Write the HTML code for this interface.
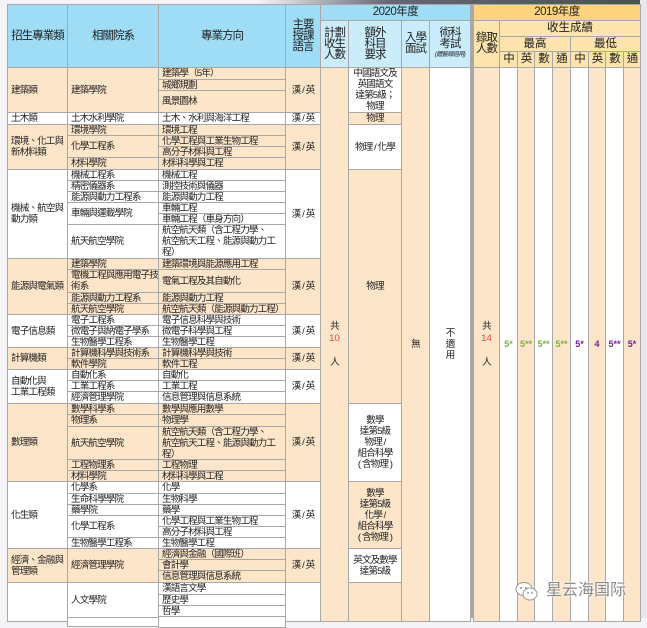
<!DOCTYPE html>
<html><head><meta charset="utf-8">
<style>
*{margin:0;padding:0;box-sizing:border-box}
body{width:647px;height:618px;overflow:hidden;background:#f4f4f6;position:relative;font-family:"Liberation Sans","Noto Sans CJK TC",sans-serif;font-size:10px;color:#222}
.c{position:absolute;border:1px solid #a8a8a8;display:flex;align-items:center;line-height:11px;overflow:hidden;white-space:nowrap;font-size:9.6px;letter-spacing:-0.9px}
.l{padding-left:3px}
.m{justify-content:center;text-align:center}
.o{background:#fde5c9}
.w{background:#fff}
.b{background:#9fddf6}
.lb{background:#cbedfb}
.y{background:#fdd37f}
.ly{background:#fde3ac}
.h{font-size:11.5px;line-height:11px;letter-spacing:-1px}
.v{flex-direction:column;justify-content:center;text-align:center}
.g{color:#7cb342;font-weight:bold;font-size:9px;letter-spacing:0}
.p{color:#7b1fa2;font-weight:bold;font-size:9px;letter-spacing:0}
.r{color:#f0443a;letter-spacing:0}
</style></head><body>
<div style="position:absolute;left:0;top:0;width:647px;height:5px;background:linear-gradient(90deg,#f4f4f6 40%,#667 60%,#454 100%)"></div>
<div style="position:absolute;left:640px;top:0;width:7px;height:618px;background:#e8e6ea"></div>

<!-- headers -->
<div class="c b m h" style="left:7px;top:4px;width:61px;height:64px">招生專業類</div>
<div class="c b m h" style="left:67px;top:4px;width:92px;height:64px">相關院系</div>
<div class="c b m h" style="left:158px;top:4px;width:128px;height:64px">專業方向</div>
<div class="c b v h" style="left:285px;top:4px;width:36px;height:64px">主要<br>授課<br>語言</div>
<div class="c b m h" style="left:320px;top:4px;width:151px;height:17px;letter-spacing:-0.5px">2020年度</div>
<div class="c lb v h" style="left:320px;top:20px;width:29px;height:48px">計劃<br>收生<br>人數</div>
<div class="c lb v h" style="left:348px;top:20px;width:54px;height:48px">額外<br>科目<br>要求</div>
<div class="c lb v h" style="left:401px;top:20px;width:29px;height:48px">入學<br>面試</div>
<div class="c lb v h" style="left:429px;top:20px;width:42px;height:48px">術科<br>考試<br><span style="font-size:6px;font-style:italic;letter-spacing:-0.5px">(體藝類適用)</span></div>
<div style="position:absolute;left:470px;top:4px;width:4px;height:614px;background:#a8a8a8"></div>
<div class="c y m h" style="left:473px;top:4px;width:168px;height:17px;letter-spacing:-0.5px">2019年度</div>
<div class="c ly v h" style="left:473px;top:20px;width:27px;height:48px">錄取<br>人數</div>
<div class="c ly m h" style="left:499px;top:20px;width:142px;height:17px;letter-spacing:0">收生成績</div>
<div class="c ly m h" style="left:499px;top:36px;width:72px;height:16px;letter-spacing:0">最高</div>
<div class="c ly m h" style="left:570px;top:36px;width:71px;height:16px;letter-spacing:0">最低</div>
<div class="c ly m h" style="left:499px;top:51px;width:19px;height:17px">中</div>
<div class="c ly m h" style="left:517px;top:51px;width:18px;height:17px">英</div>
<div class="c ly m h" style="left:534px;top:51px;width:19px;height:17px">數</div>
<div class="c ly m h" style="left:552px;top:51px;width:19px;height:17px">通</div>
<div class="c ly m h" style="left:570px;top:51px;width:19px;height:17px">中</div>
<div class="c ly m h" style="left:588px;top:51px;width:18px;height:17px">英</div>
<div class="c ly m h" style="left:605px;top:51px;width:19px;height:17px">數</div>
<div class="c ly m h" style="left:623px;top:51px;width:18px;height:17px">通</div>

<!-- col 1 categories -->
<div class="c o l" style="left:7px;top:67px;width:61px;height:46px">建築類</div>
<div class="c w l" style="left:7px;top:112px;width:61px;height:13px">土木類</div>
<div class="c o l" style="left:7px;top:124px;width:61px;height:46px">環境、化工與<br>新材料類</div>
<div class="c w l" style="left:7px;top:169px;width:61px;height:90px">機械、航空與<br>動力類</div>
<div class="c o l" style="left:7px;top:258px;width:61px;height:57px">能源與電氣類</div>
<div class="c w l" style="left:7px;top:314px;width:61px;height:34px">電子信息類</div>
<div class="c o l" style="left:7px;top:347px;width:61px;height:23px">計算機類</div>
<div class="c w l" style="left:7px;top:369px;width:61px;height:35px">自動化與<br>工業工程類</div>
<div class="c o l" style="left:7px;top:403px;width:61px;height:79px">數理類</div>
<div class="c w l" style="left:7px;top:481px;width:61px;height:68px">化生類</div>
<div class="c o l" style="left:7px;top:548px;width:61px;height:35px">經濟、金融與<br>管理類</div>
<div class="c w l" style="left:7px;top:582px;width:61px;height:40px"></div>

<!-- col 2 depts -->
<div class="c o l" style="left:67px;top:67px;width:92px;height:46px">建築學院</div>
<div class="c w l" style="left:67px;top:112px;width:92px;height:13px">土木水利學院</div>
<div class="c o l" style="left:67px;top:124px;width:92px;height:12px">環境學院</div>
<div class="c o l" style="left:67px;top:135px;width:92px;height:23px">化學工程系</div>
<div class="c o l" style="left:67px;top:157px;width:92px;height:13px">材料學院</div>
<div class="c w l" style="left:67px;top:169px;width:92px;height:12px">機械工程系</div>
<div class="c w l" style="left:67px;top:180px;width:92px;height:12px">精密儀器系</div>
<div class="c w l" style="left:67px;top:191px;width:92px;height:12px">能源與動力工程系</div>
<div class="c w l" style="left:67px;top:202px;width:92px;height:23px">車輛與運載學院</div>
<div class="c w l" style="left:67px;top:224px;width:92px;height:35px">航天航空學院</div>
<div class="c o l" style="left:67px;top:258px;width:92px;height:12px">建築學院</div>
<div class="c o l" style="left:67px;top:269px;width:92px;height:24px">電機工程與應用電子技<br>術系</div>
<div class="c o l" style="left:67px;top:292px;width:92px;height:12px">能源與動力工程系</div>
<div class="c o l" style="left:67px;top:303px;width:92px;height:12px">航天航空學院</div>
<div class="c w l" style="left:67px;top:314px;width:92px;height:12px">電子工程系</div>
<div class="c w l" style="left:67px;top:325px;width:92px;height:12px">微電子與納電子學系</div>
<div class="c w l" style="left:67px;top:336px;width:92px;height:12px">生物醫學工程系</div>
<div class="c o l" style="left:67px;top:347px;width:92px;height:12px">計算機科學與技術系</div>
<div class="c o l" style="left:67px;top:358px;width:92px;height:12px">軟件學院</div>
<div class="c w l" style="left:67px;top:369px;width:92px;height:12px">自動化系</div>
<div class="c w l" style="left:67px;top:380px;width:92px;height:12px">工業工程系</div>
<div class="c w l" style="left:67px;top:391px;width:92px;height:13px">經濟管理學院</div>
<div class="c o l" style="left:67px;top:403px;width:92px;height:12px">數學科學系</div>
<div class="c o l" style="left:67px;top:414px;width:92px;height:13px">物理系</div>
<div class="c o l" style="left:67px;top:426px;width:92px;height:34px">航天航空學院</div>
<div class="c o l" style="left:67px;top:459px;width:92px;height:12px">工程物理系</div>
<div class="c o l" style="left:67px;top:470px;width:92px;height:12px">材料學院</div>
<div class="c w l" style="left:67px;top:481px;width:92px;height:13px">化學系</div>
<div class="c w l" style="left:67px;top:493px;width:92px;height:12px">生命科學學院</div>
<div class="c w l" style="left:67px;top:504px;width:92px;height:12px">藥學院</div>
<div class="c w l" style="left:67px;top:515px;width:92px;height:23px">化學工程系</div>
<div class="c w l" style="left:67px;top:537px;width:92px;height:12px">生物醫學工程系</div>
<div class="c o l" style="left:67px;top:548px;width:92px;height:35px">經濟管理學院</div>
<div class="c w l" style="left:67px;top:582px;width:92px;height:36px">人文學院</div>
<div class="c w l" style="left:67px;top:617px;width:92px;height:10px"></div>

<!-- col 3 directions -->
<div class="c o l" style="left:158px;top:67px;width:128px;height:13px">建築學（5年）</div>
<div class="c o l" style="left:158px;top:79px;width:128px;height:12px">城鄉規劃</div>
<div class="c o l" style="left:158px;top:90px;width:128px;height:23px">風景園林</div>
<div class="c w l" style="left:158px;top:112px;width:128px;height:13px">土木、水利與海洋工程</div>
<div class="c o l" style="left:158px;top:124px;width:128px;height:12px">環境工程</div>
<div class="c o l" style="left:158px;top:135px;width:128px;height:12px">化學工程與工業生物工程</div>
<div class="c o l" style="left:158px;top:146px;width:128px;height:12px">高分子材料與工程</div>
<div class="c o l" style="left:158px;top:157px;width:128px;height:13px">材料科學與工程</div>
<div class="c w l" style="left:158px;top:169px;width:128px;height:12px">機械工程</div>
<div class="c w l" style="left:158px;top:180px;width:128px;height:12px">測控技術與儀器</div>
<div class="c w l" style="left:158px;top:191px;width:128px;height:12px">能源與動力工程</div>
<div class="c w l" style="left:158px;top:202px;width:128px;height:12px">車輛工程</div>
<div class="c w l" style="left:158px;top:213px;width:128px;height:12px">車輛工程（車身方向）</div>
<div class="c w l" style="left:158px;top:224px;width:128px;height:35px">航空航天類（含工程力學、<br>航空航天工程、能源與動力工<br>程）</div>
<div class="c o l" style="left:158px;top:258px;width:128px;height:12px">建築環境與能源應用工程</div>
<div class="c o l" style="left:158px;top:269px;width:128px;height:24px">電氣工程及其自動化</div>
<div class="c o l" style="left:158px;top:292px;width:128px;height:12px">能源與動力工程</div>
<div class="c o l" style="left:158px;top:303px;width:128px;height:12px">航空航天類（能源與動力工程）</div>
<div class="c w l" style="left:158px;top:314px;width:128px;height:12px">電子信息科學與技術</div>
<div class="c w l" style="left:158px;top:325px;width:128px;height:12px">微電子科學與工程</div>
<div class="c w l" style="left:158px;top:336px;width:128px;height:12px">生物醫學工程</div>
<div class="c o l" style="left:158px;top:347px;width:128px;height:12px">計算機科學與技術</div>
<div class="c o l" style="left:158px;top:358px;width:128px;height:12px">軟件工程</div>
<div class="c w l" style="left:158px;top:369px;width:128px;height:12px">自動化</div>
<div class="c w l" style="left:158px;top:380px;width:128px;height:12px">工業工程</div>
<div class="c w l" style="left:158px;top:391px;width:128px;height:13px">信息管理與信息系統</div>
<div class="c o l" style="left:158px;top:403px;width:128px;height:12px">數學與應用數學</div>
<div class="c o l" style="left:158px;top:414px;width:128px;height:13px">物理學</div>
<div class="c o l" style="left:158px;top:426px;width:128px;height:34px">航空航天類（含工程力學、<br>航空航天工程、能源與動力工<br>程）</div>
<div class="c o l" style="left:158px;top:459px;width:128px;height:12px">工程物理</div>
<div class="c o l" style="left:158px;top:470px;width:128px;height:12px">材料科學與工程</div>
<div class="c w l" style="left:158px;top:481px;width:128px;height:13px">化學</div>
<div class="c w l" style="left:158px;top:493px;width:128px;height:12px">生物科學</div>
<div class="c w l" style="left:158px;top:504px;width:128px;height:12px">藥學</div>
<div class="c w l" style="left:158px;top:515px;width:128px;height:12px">化學工程與工業生物工程</div>
<div class="c w l" style="left:158px;top:526px;width:128px;height:12px">高分子材料與工程</div>
<div class="c w l" style="left:158px;top:537px;width:128px;height:12px">生物醫學工程</div>
<div class="c o l" style="left:158px;top:548px;width:128px;height:12px">經濟與金融（國際班）</div>
<div class="c o l" style="left:158px;top:559px;width:128px;height:12px">會計學</div>
<div class="c o l" style="left:158px;top:570px;width:128px;height:13px">信息管理與信息系統</div>
<div class="c w l" style="left:158px;top:582px;width:128px;height:13px">漢語言文學</div>
<div class="c w l" style="left:158px;top:594px;width:128px;height:12px">歷史學</div>
<div class="c w l" style="left:158px;top:605px;width:128px;height:12px">哲學</div>
<div class="c w l" style="left:158px;top:616px;width:128px;height:12px"></div>

<!-- col 4 language -->
<div class="c o m" style="left:285px;top:67px;width:36px;height:46px">漢 / 英</div>
<div class="c w m" style="left:285px;top:112px;width:36px;height:13px">漢 / 英</div>
<div class="c o m" style="left:285px;top:124px;width:36px;height:46px">漢 / 英</div>
<div class="c w m" style="left:285px;top:169px;width:36px;height:90px">漢 / 英</div>
<div class="c o m" style="left:285px;top:258px;width:36px;height:57px">漢 / 英</div>
<div class="c w m" style="left:285px;top:314px;width:36px;height:34px">漢 / 英</div>
<div class="c o m" style="left:285px;top:347px;width:36px;height:23px">漢 / 英</div>
<div class="c w m" style="left:285px;top:369px;width:36px;height:35px">漢 / 英</div>
<div class="c o m" style="left:285px;top:403px;width:36px;height:79px">漢 / 英</div>
<div class="c w m" style="left:285px;top:481px;width:36px;height:68px">漢 / 英</div>
<div class="c o m" style="left:285px;top:548px;width:36px;height:35px">漢 / 英</div>
<div class="c w m" style="left:285px;top:582px;width:36px;height:40px"></div>

<!-- 2020 right cols -->
<div class="c o v" style="left:320px;top:67px;width:29px;height:555px;line-height:12px">共<br><span class="r">10</span><br>人</div>
<div class="c w v" style="left:348px;top:67px;width:54px;height:46px;line-height:11px">中國語文及<br>英國語文<br>達第5級；<br>物理</div>
<div class="c o m" style="left:348px;top:112px;width:54px;height:13px">物理</div>
<div class="c w m" style="left:348px;top:124px;width:54px;height:46px">物理 / 化學</div>
<div class="c o m" style="left:348px;top:169px;width:54px;height:235px">物理</div>
<div class="c w v" style="left:348px;top:403px;width:54px;height:79px">數學<br>達第5級<br>物理 /<br>組合科學<br>( 含物理 )</div>
<div class="c o v" style="left:348px;top:481px;width:54px;height:68px">數學<br>達第5級<br>化學 /<br>組合科學<br>( 含物理 )</div>
<div class="c w v" style="left:348px;top:548px;width:54px;height:35px">英文及數學<br>達第5級</div>
<div class="c o m" style="left:348px;top:582px;width:54px;height:40px"></div>
<div class="c o m" style="left:401px;top:67px;width:29px;height:555px">無</div>
<div class="c w v" style="left:429px;top:67px;width:42px;height:555px;line-height:11px">不<br>適<br>用</div>

<!-- 2019 cols -->
<div class="c o v" style="left:473px;top:67px;width:27px;height:555px;line-height:12px">共<br><span class="r">14</span><br>人</div>
<div class="c w m g" style="left:499px;top:67px;width:19px;height:555px">5*</div>
<div class="c o m g" style="left:517px;top:67px;width:18px;height:555px">5**</div>
<div class="c w m g" style="left:534px;top:67px;width:19px;height:555px">5**</div>
<div class="c o m g" style="left:552px;top:67px;width:19px;height:555px">5**</div>
<div class="c w m p" style="left:570px;top:67px;width:19px;height:555px">5*</div>
<div class="c o m p" style="left:588px;top:67px;width:18px;height:555px">4</div>
<div class="c w m p" style="left:605px;top:67px;width:19px;height:555px">5**</div>
<div class="c o m p" style="left:623px;top:67px;width:18px;height:555px">5*</div>

<!-- watermark -->
<svg style="position:absolute;left:514px;top:581px" width="26" height="22" viewBox="0 0 26 22">
<ellipse cx="10" cy="8" rx="8" ry="6.5" fill="#fff" stroke="#999" stroke-width="1"/>
<ellipse cx="16" cy="13" rx="7" ry="6" fill="#fff" stroke="#999" stroke-width="1"/>
<circle cx="7" cy="7" r="1" fill="#888"/><circle cx="12" cy="7" r="1" fill="#888"/>
<circle cx="14" cy="12" r="0.9" fill="#888"/><circle cx="18" cy="12" r="0.9" fill="#888"/>
</svg>
<div style="position:absolute;left:546px;top:582px;font-size:16px;line-height:18px;color:#8a8a8a;text-shadow:0 0 2px #fff,0 0 2px #fff;font-family:'Liberation Sans','Noto Sans CJK SC',sans-serif">星云海国际</div>
</body></html>
